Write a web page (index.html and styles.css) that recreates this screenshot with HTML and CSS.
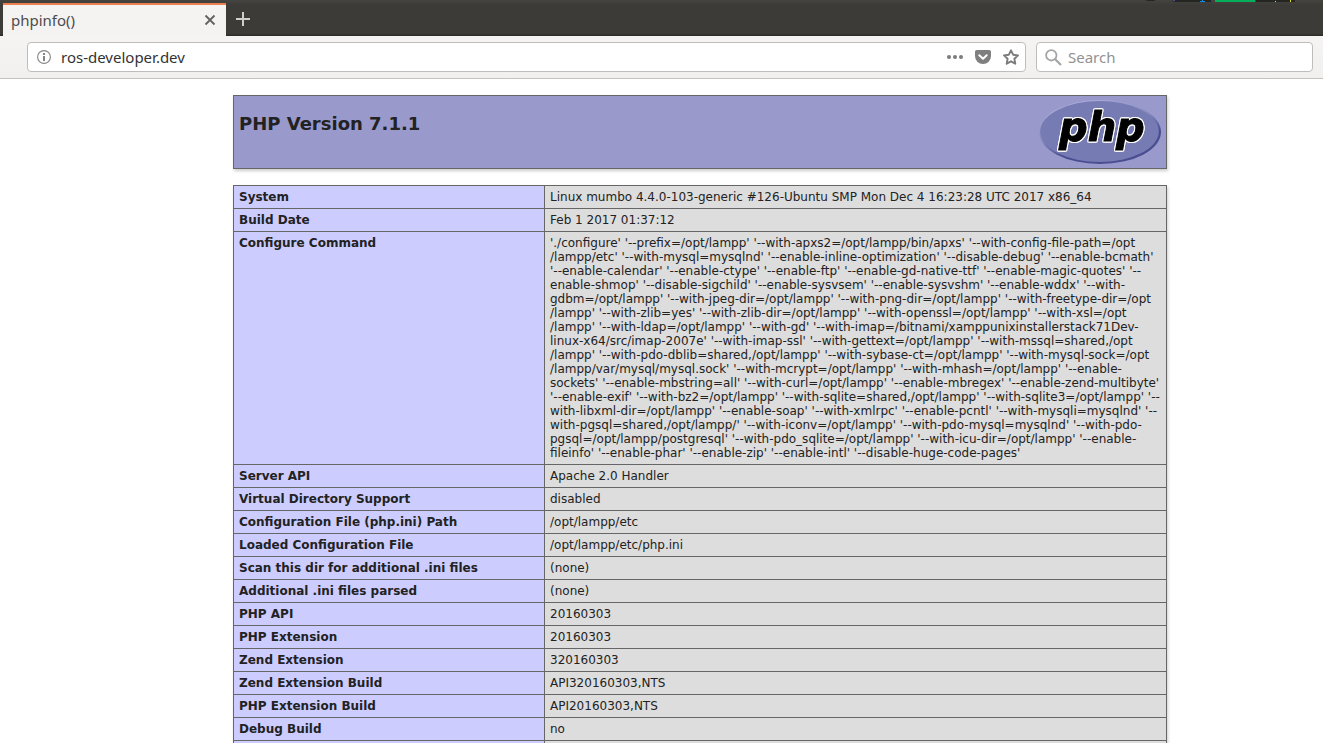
FILE: index.html
```html
<!DOCTYPE html>
<html lang="en">
<head>
<meta charset="utf-8">
<title>phpinfo()</title>
<link rel="stylesheet" href="styles.css">
</head>
<body>
<header class="browser">
  <div class="tabstrip">
    <div class="tab">
      <span class="tab-title">phpinfo()</span>
      <button class="icon-button" type="button" aria-label="Close tab">
        <svg width="12" height="12" viewBox="0 0 12 12"><path d="M1.5 1.5l9 9M10.5 1.5l-9 9" fill="none" stroke="#62625f" stroke-width="1.8"/></svg>
      </button>
    </div>
    <button class="icon-button new-tab" type="button" aria-label="New tab">
      <svg width="14" height="14" viewBox="0 0 14 14"><path d="M7 0v14M0 7h14" fill="none" stroke="#d0cec9" stroke-width="2"/></svg>
    </button>
    <svg class="monitor" width="150" height="2" viewBox="0 0 150 2" aria-hidden="true">
      <path d="M0 0h11l-3 1H3zM27 0h39v2H29zM111 0h40v1h-1v1h-39z" fill="#252522"/>
      <path d="M70 0h40v2H70z" fill="#06ad5b"/>
      <path d="M55 1h2V0h1v1h2v1h-5z" fill="#1789dc"/>
      <path d="M28 0h2v1h-2z" fill="#4650b0"/>
      <path d="M130 1h1v1h-1zM145 0h1v2h-1z" fill="#e5df18"/>
    </svg>
  </div>
  <div class="toolbar">
    <div class="field address">
      <svg width="14" height="14" viewBox="0 0 14 14"><circle cx="7" cy="7" r="6.4" fill="none" stroke="#858585" stroke-width="1.1"/><path d="M6.1 3.1h1.8v1.8H6.1zM6.1 6h1.8v5H6.1z" fill="#777"/></svg>
      <input class="field-input" type="text" value="ros-developer.dev" aria-label="Address">
      <div class="actions">
        <button class="icon-button" type="button" aria-label="Page actions">
          <svg width="16" height="16" viewBox="0 0 16 16" fill="#7b7b7b"><circle cx="2" cy="8" r="2"/><circle cx="8" cy="8" r="2"/><circle cx="14" cy="8" r="2"/></svg>
        </button>
        <button class="icon-button" type="button" aria-label="Save to Pocket">
          <svg width="16" height="16" viewBox="0 0 16 16"><path d="M1.8 1h12.4Q16 1 16 2.8V7a8 8 0 0 1-16 0V2.8Q0 1 1.8 1z" fill="#7f7f7f"/><path d="M4.3 6.2L8 9.7l3.7-3.5" fill="none" stroke="#fff" stroke-width="2" stroke-linecap="round" stroke-linejoin="round"/></svg>
        </button>
        <button class="icon-button" type="button" aria-label="Bookmark this page">
          <svg width="16" height="16" viewBox="0 0 16 16"><path d="M8 1.3l2.1 4.4 4.9.7-3.6 3.4.9 4.9L8 12.3l-4.3 2.4.9-4.9L1 6.4l4.9-.7z" fill="none" stroke="#7b7b7b" stroke-width="1.9" stroke-linejoin="round"/></svg>
        </button>
      </div>
    </div>
    <div class="field search">
      <svg width="17" height="17" viewBox="0 0 17 17"><circle cx="6.3" cy="6.3" r="5.2" fill="none" stroke="#a5a5a5" stroke-width="1.8"/><path d="M10 10l6 6" stroke="#a5a5a5" stroke-width="2.2"/></svg>
      <input class="field-input" type="search" placeholder="Search" aria-label="Search">
    </div>
  </div>
</header>
<main class="page">
  <div class="banner">
    <h1 class="version">PHP Version 7.1.1</h1>
    <a class="logo" href="#" aria-label="PHP">
      <svg width="122" height="64" viewBox="0 0 122 64">
        <defs>
          <linearGradient id="rim" x1="0.2" y1="0" x2="0.7" y2="1"><stop offset="0" stop-color="#b3b7df"/><stop offset="0.45" stop-color="#8489be"/><stop offset="0.7" stop-color="#4a4e91"/><stop offset="1" stop-color="#4a4e91"/></linearGradient>
        </defs>
        <ellipse cx="61" cy="32" rx="61" ry="32" fill="url(#rim)"/>
        <ellipse cx="60.5" cy="31.5" rx="59.3" ry="30.5" fill="#777bb3"/>
        <text class="logo-text" x="20" y="41">php</text>
      </svg>
    </a>
  </div>
  <table class="info">
    <tbody>
      <tr><th scope="row">System</th><td>Linux mumbo 4.4.0-103-generic #126-Ubuntu SMP Mon Dec 4 16:23:28 UTC 2017 x86_64</td></tr>
      <tr><th scope="row">Build Date</th><td>Feb 1 2017 01:37:12</td></tr>
      <tr><th scope="row">Configure Command</th><td class="command">'./configure' '--prefix=/opt/lampp' '--with-apxs2=/opt/lampp/bin/apxs' '--with-config-file-path=/opt<br>/lampp/etc' '--with-mysql=mysqlnd' '--enable-inline-optimization' '--disable-debug' '--enable-bcmath'<br>'--enable-calendar' '--enable-ctype' '--enable-ftp' '--enable-gd-native-ttf' '--enable-magic-quotes' '--<br>enable-shmop' '--disable-sigchild' '--enable-sysvsem' '--enable-sysvshm' '--enable-wddx' '--with-<br>gdbm=/opt/lampp' '--with-jpeg-dir=/opt/lampp' '--with-png-dir=/opt/lampp' '--with-freetype-dir=/opt<br>/lampp' '--with-zlib=yes' '--with-zlib-dir=/opt/lampp' '--with-openssl=/opt/lampp' '--with-xsl=/opt<br>/lampp' '--with-ldap=/opt/lampp' '--with-gd' '--with-imap=/bitnami/xamppunixinstallerstack71Dev-<br>linux-x64/src/imap-2007e' '--with-imap-ssl' '--with-gettext=/opt/lampp' '--with-mssql=shared,/opt<br>/lampp' '--with-pdo-dblib=shared,/opt/lampp' '--with-sybase-ct=/opt/lampp' '--with-mysql-sock=/opt<br>/lampp/var/mysql/mysql.sock' '--with-mcrypt=/opt/lampp' '--with-mhash=/opt/lampp' '--enable-<br>sockets' '--enable-mbstring=all' '--with-curl=/opt/lampp' '--enable-mbregex' '--enable-zend-multibyte'<br>'--enable-exif' '--with-bz2=/opt/lampp' '--with-sqlite=shared,/opt/lampp' '--with-sqlite3=/opt/lampp' '--<br>with-libxml-dir=/opt/lampp' '--enable-soap' '--with-xmlrpc' '--enable-pcntl' '--with-mysqli=mysqlnd' '--<br>with-pgsql=shared,/opt/lampp/' '--with-iconv=/opt/lampp' '--with-pdo-mysql=mysqlnd' '--with-pdo-<br>pgsql=/opt/lampp/postgresql' '--with-pdo_sqlite=/opt/lampp' '--with-icu-dir=/opt/lampp' '--enable-<br>fileinfo' '--enable-phar' '--enable-zip' '--enable-intl' '--disable-huge-code-pages'</td></tr>
      <tr><th scope="row">Server API</th><td>Apache 2.0 Handler</td></tr>
      <tr><th scope="row">Virtual Directory Support</th><td>disabled</td></tr>
      <tr><th scope="row">Configuration File (php.ini) Path</th><td>/opt/lampp/etc</td></tr>
      <tr><th scope="row">Loaded Configuration File</th><td>/opt/lampp/etc/php.ini</td></tr>
      <tr><th scope="row">Scan this dir for additional .ini files</th><td>(none)</td></tr>
      <tr><th scope="row">Additional .ini files parsed</th><td>(none)</td></tr>
      <tr><th scope="row">PHP API</th><td>20160303</td></tr>
      <tr><th scope="row">PHP Extension</th><td>20160303</td></tr>
      <tr><th scope="row">Zend Extension</th><td>320160303</td></tr>
      <tr><th scope="row">Zend Extension Build</th><td>API320160303,NTS</td></tr>
      <tr><th scope="row">PHP Extension Build</th><td>API20160303,NTS</td></tr>
      <tr><th scope="row">Debug Build</th><td>no</td></tr>
      <tr><th></th><td></td></tr>
    </tbody>
  </table>
</main>
</body>
</html>
```

FILE: styles.css
```css
* {
  box-sizing: border-box;
}

body {
  display: flex;
  flex-direction: column;
  height: 100vh;
  margin: 0;
  overflow: hidden;
  background: #fff;
  color: #222;
  font: 12px/14px "DejaVu Sans", sans-serif;
}

svg {
  display: block;
  flex: none;
}

.browser {
  flex: none;
  font: 15px/20px "Noto Sans", sans-serif;
}

.tabstrip {
  display: flex;
  align-items: flex-start;
  height: 36px;
  padding-left: 3px;
  background: linear-gradient(#45443f, #3c3b37 5px, #3c3b37 34px, #2d2c29 35px);
}

.tab {
  display: flex;
  align-items: center;
  justify-content: space-between;
  width: 223px;
  height: 33px;
  margin-top: 3px;
  padding: 0 10px 2px 8px;
  border-top: 2px solid #ec7f50;
  background: #f4f3f2;
  color: #4c4c4c;
}

.icon-button {
  display: flex;
  padding: 0;
  border: 0;
  background: none;
}

.new-tab {
  margin: 12px 0 0 10px;
}

.monitor {
  margin-left: auto;
  margin-right: 28px;
}

.toolbar {
  display: flex;
  gap: 10px;
  height: 43px;
  padding: 6px 10px 6px 27px;
  border-bottom: 1px solid #c4c3c1;
  background: linear-gradient(#f5f4f3, #f1f0ee);
}

.field {
  display: flex;
  align-items: center;
  height: 30px;
  border: 1px solid #bebdbb;
  border-radius: 4px;
  background: #fff;
}

.address {
  flex: 1;
  gap: 10px;
  padding: 0 6px 0 9px;
}

.search {
  width: 277px;
  gap: 6px;
  padding: 0 8px;
}

.field-input {
  flex: 1;
  min-width: 0;
  padding: 0;
  border: 0;
  outline: 0;
  background: none;
  color: #333;
  font: inherit;
}

.field-input::placeholder {
  color: #929292;
  opacity: 1;
}

.actions {
  display: flex;
  gap: 12px;
}

.page {
  flex: 1;
  min-height: 0;
  padding: 16px 156px 0 233px;
}

.banner {
  display: flex;
  justify-content: space-between;
  height: 74px;
  margin-bottom: 16px;
  padding: 4px 5px;
  border: 1px solid #666;
  background: #99c;
  box-shadow: 1px 2px 3px #ccc;
}

.version {
  margin: 13px 0 0;
  font-size: 18px;
  line-height: 21px;
}

.logo-text {
  fill: #000;
  stroke: #000;
  stroke-width: 1px;
  filter: drop-shadow(1px 0 0 #fff) drop-shadow(-1px 0 0 #fff) drop-shadow(0 1px 0 #fff) drop-shadow(0 -1px 0 #fff);
  font: italic bold 40px "DejaVu Sans", sans-serif;
}

.info {
  width: 100%;
  border-collapse: collapse;
  box-shadow: 1px 2px 3px #ccc;
}

.info th,
.info td {
  height: 23px;
  padding: 4px 5px;
  border: 1px solid #666;
  text-align: left;
  vertical-align: top;
}

.info th {
  width: 311px;
  background: #ccf;
}

.info td {
  background: #ddd;
}

.command {
  white-space: nowrap;
}
```
